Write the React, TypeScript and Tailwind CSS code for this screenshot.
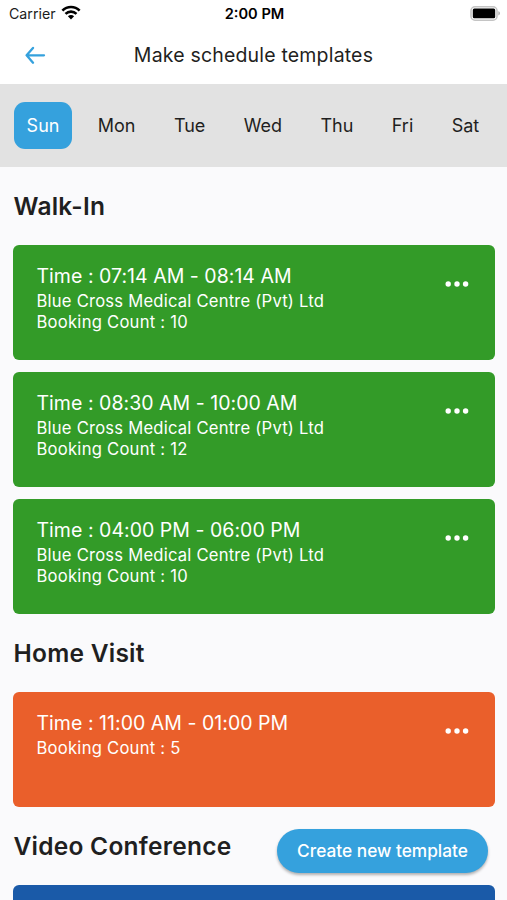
import React, { useState } from "react";

interface Slot {
  time: string;
  place?: string;
  count: number;
}

interface Section {
  title: string;
  color: string;
  slots: Slot[];
}

const DAYS = ["Sun", "Mon", "Tue", "Wed", "Thu", "Fri", "Sat"];

const CENTRE = "Blue Cross Medical Centre (Pvt) Ltd";

const SECTIONS: Section[] = [
  {
    title: "Walk-In",
    color: "bg-[#339b28]",
    slots: [
      { time: "07:14 AM - 08:14 AM", place: CENTRE, count: 10 },
      { time: "08:30 AM - 10:00 AM", place: CENTRE, count: 12 },
      { time: "04:00 PM - 06:00 PM", place: CENTRE, count: 10 },
    ],
  },
  {
    title: "Home Visit",
    color: "bg-[#ea5f2b]",
    slots: [{ time: "11:00 AM - 01:00 PM", count: 5 }],
  },
  {
    title: "Video Conference",
    color: "bg-[#1a5aa8]",
    slots: [],
  },
];

const StatusBar: React.FC = () => (
  <div className="grid h-7 grid-cols-3 items-center pl-[9px] pr-[7px] text-black">
    <div className="flex items-center gap-[5px]">
      <span className="text-[14.2px] text-[#1c1c1c]">Carrier</span>
      <svg className="-mt-[2px]" width="20" height="15" viewBox="0 0 20 15" fill="none" stroke="#000">
        <path d="M1.4 5.6C6.2 0.8 13.8 0.8 18.6 5.6" strokeWidth="2.7" />
        <path d="M4.5 8.9C7.6 5.9 12.4 5.9 15.5 8.9" strokeWidth="2.6" />
        <path d="M10 14.4L6.9 11.3C8.6 9.6 11.4 9.6 13.1 11.3Z" fill="#000" stroke="none" />
      </svg>
    </div>
    <div className="pt-px text-center text-[14.6px] font-semibold">2:00 PM</div>
    <svg className="-mt-[2px] justify-self-end" width="30" height="15" viewBox="0 0 30 15">
      <rect x="1" y="0.8" width="26" height="13.4" rx="4" fill="#fff" stroke="#c4c4c4" strokeWidth="1.6" />
      <rect x="2.8" y="2.6" width="22.4" height="9.6" rx="1.5" fill="#000" />
      <path d="M28.4 5.2C30.4 5.9 30.4 8.7 28.4 9.4Z" fill="#a8a8a8" />
    </svg>
  </div>
);

const SlotCard: React.FC<{ slot?: Slot; color: string }> = ({ slot, color }) => (
  <div
    className={`flex h-[115px] items-start justify-between rounded-[6px] pt-[18px] pr-[26px] pl-[23.5px] text-white ${color}`}
  >
    {slot && (
      <>
        <div>
          <p className="mb-[2px] text-[19.5px] leading-[26px] tracking-[0.03px]">Time : {slot.time}</p>
          {slot.place && (
            <p className="text-[16.6px] leading-[21px] tracking-[0.22px]">{slot.place}</p>
          )}
          <p className="text-[16.6px] leading-[21px] tracking-[0.25px]">Booking Count : {slot.count}</p>
        </div>
        <button className="mt-[18px]" title="More">
          <svg width="24" height="6" viewBox="0 0 24 6" fill="#fff">
            <circle cx="3.2" cy="3" r="2.7" />
            <circle cx="12" cy="3" r="2.7" />
            <circle cx="20.6" cy="3" r="2.7" />
          </svg>
        </button>
      </>
    )}
  </div>
);

export default function App() {
  const [day, setDay] = useState("Sun");

  return (
    <div className="relative h-[900px] w-full overflow-hidden bg-[#fafafc] font-['Inter',sans-serif] text-[#1f1f21]">
      <header className="h-[84px] bg-white">
        <StatusBar />
        <div className="grid h-[54px] grid-cols-[60px_1fr_60px] items-center">
          <button className="pl-[25px]" title="Back">
            <svg width="21" height="18" viewBox="0 0 21 18" fill="none" stroke="#35a1dd" strokeWidth="2.3" strokeLinecap="round" strokeLinejoin="round">
              <path d="M19 9.3H1.8M8 1.9L1.6 9.3L8 16.7" />
            </svg>
          </button>
          <h1 className="mt-[2px] text-center text-[19.5px] tracking-[0.18px]">Make schedule templates</h1>
        </div>
      </header>

      <nav className="flex h-[83px] items-center gap-[12.4px] bg-[#e2e2e2] pl-[13.6px]">
        {DAYS.map((d) => (
          <button
            key={d}
            onClick={() => setDay(d)}
            className={`h-[47px] rounded-[11px] px-[13px] text-[18px] ${
              d === day ? "bg-[#35a1dd] text-white" : ""
            }`}
          >
            {d}
          </button>
        ))}
      </nav>

      <main className="pr-3 pl-[13px]">
        {SECTIONS.map((section) => (
          <section key={section.title}>
            <h2 className="flex h-[78px] items-center pl-[0.5px] text-[24.5px] font-semibold tracking-[0.25px]">
              {section.title}
            </h2>
            <div className="flex flex-col gap-3">
              {section.slots.map((slot) => (
                <SlotCard key={slot.time} slot={slot} color={section.color} />
              ))}
              {section.slots.length === 0 && <SlotCard color={section.color} />}
            </div>
          </section>
        ))}
      </main>

      {/* Floating action button */}
      <button className="absolute right-[19px] bottom-[27px] h-11 w-[211px] rounded-full bg-[#35a1dd] text-[17.3px] font-medium text-white shadow-[0_2px_3px_rgba(0,0,0,0.3)]">
        Create new template
      </button>
    </div>
  );
}
